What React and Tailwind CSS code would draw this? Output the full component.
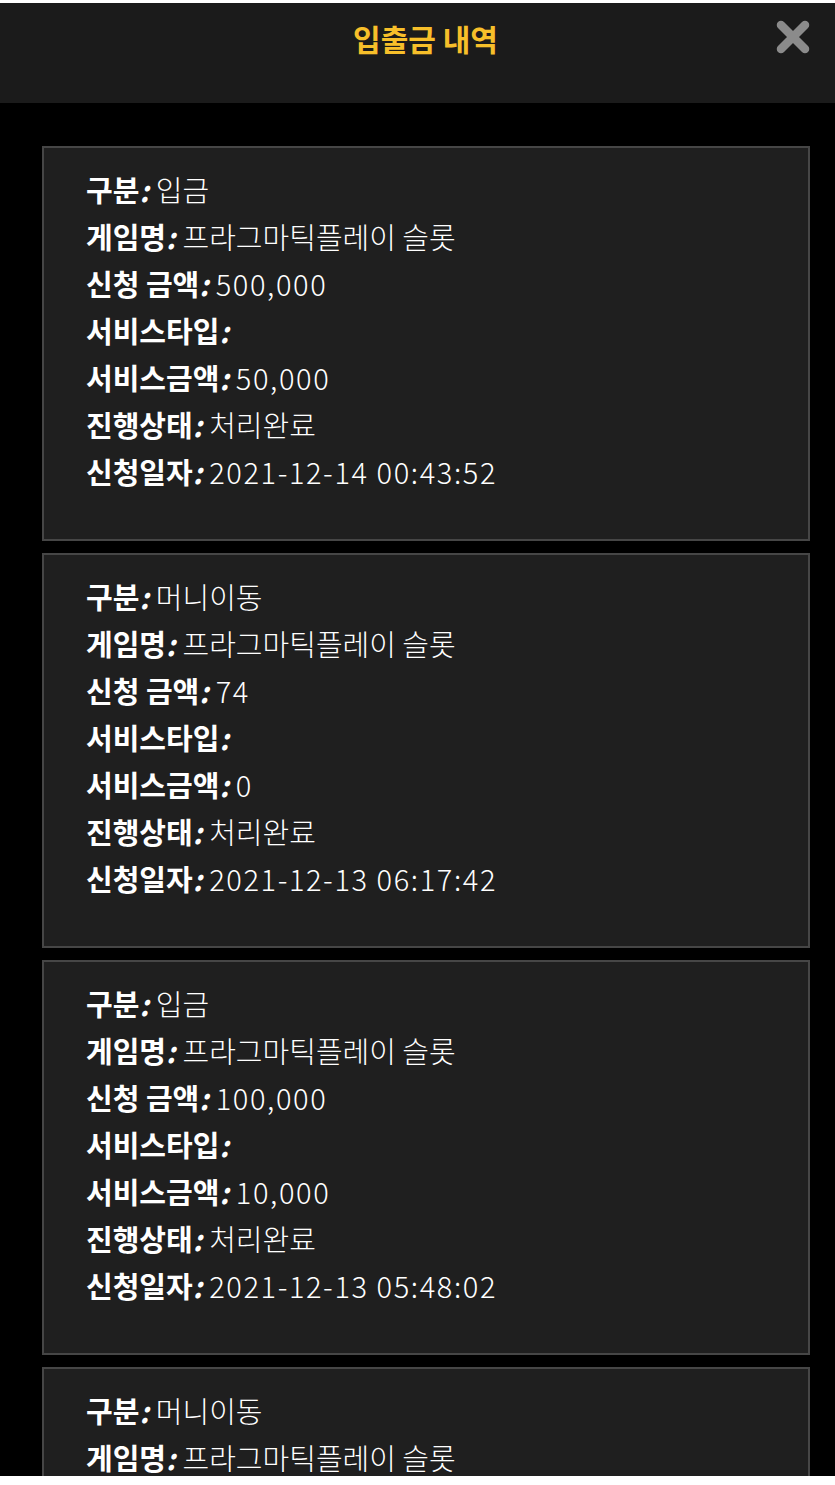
import { useState } from "react";

const rows = [
    { type: "입금", game: "프라그마틱플레이 슬롯", amount: "500,000", service: "", serviceAmount: "50,000", status: "처리완료", date: "2021-12-14 00:43:52" },
    { type: "머니이동", game: "프라그마틱플레이 슬롯", amount: "74", service: "", serviceAmount: "0", status: "처리완료", date: "2021-12-13 06:17:42" },
    { type: "입금", game: "프라그마틱플레이 슬롯", amount: "100,000", service: "", serviceAmount: "10,000", status: "처리완료", date: "2021-12-13 05:48:02" },
    { type: "머니이동", game: "프라그마틱플레이 슬롯", amount: "0", service: "", serviceAmount: "0", status: "처리완료", date: "2021-12-12 22:10:11" },
];

const Field = ({ label, value, num }) => (
    <div className="flex items-baseline h-[47px] leading-[47px]">
        <span className="font-bold">{label}</span>
        <span className="font-bold italic mr-[7px]">:</span>
        <span className={num ? "font-light tracking-[1.6px]" : "font-light"}>{value}</span>
    </div>
);

const App = () => {
    const [list] = useState(rows);

    return (
        <div className="w-[835px] h-[1485px] bg-white pt-[3px] overflow-hidden" style={{ fontFamily: '"Noto Sans CJK KR", "Noto Sans", sans-serif' }}>
            <div className="h-[1473px] bg-black flex flex-col overflow-hidden">
                {/* Header */}
                <div className="relative h-[100px] shrink-0 bg-[#1b1b1b] flex justify-center pt-[12px] pl-[16px]">
                    <h1 className="text-[30px] leading-[46px] font-bold text-[#f7bf2a]">입출금 내역</h1>
                    <button className="absolute right-[23px] top-[15px] w-[38px] h-[38px] flex items-center justify-center">
                        <svg width="36" height="36" viewBox="0 0 36 36">
                            <path d="M6 6 L30 30 M30 6 L6 30" stroke="#8b8b8b" strokeWidth="8.5" strokeLinecap="round" />
                        </svg>
                    </button>
                </div>

                {/* List */}
                <div className="flex flex-col gap-[12px] pt-[43px] pl-[42px] pr-[25px]">
                    {list.map((r, i) => (
                        <div key={i} className="shrink-0 h-[395px] bg-[#1f1f1f] border-2 border-[#464646] pl-[42px] pt-[18px] text-white text-[29px]">
                            <Field label="구분" value={r.type} />
                            <Field label="게임명" value={r.game} />
                            <Field label="신청 금액" value={r.amount} num />
                            <Field label="서비스타입" value={r.service} />
                            <Field label="서비스금액" value={r.serviceAmount} num />
                            <Field label="진행상태" value={r.status} />
                            <Field label="신청일자" value={r.date} num />
                        </div>
                    ))}
                </div>
            </div>
        </div>
    );
};

export default App;
